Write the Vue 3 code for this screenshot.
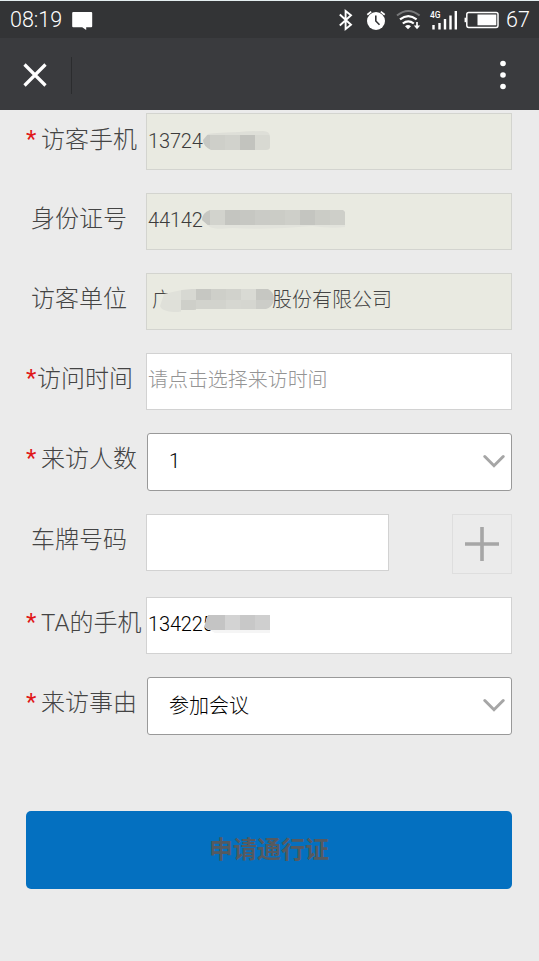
<script setup>
import { ref } from 'vue'

// tight: label text sits right next to the star
const rows = ref([
  { label: '访客手机', required: true, type: 'readonly', value: '13724', mask: 'phone' },
  { label: '身份证号', required: false, type: 'readonly', value: '44142', mask: 'id' },
  { label: '访客单位', required: false, type: 'readonly', value: '广', tail: '股份有限公司', mask: 'company' },
  { label: '访问时间', required: true, tight: true, type: 'input', placeholder: '请点击选择来访时间' },
  { label: '来访人数', required: true, type: 'select', value: '1' },
  { label: '车牌号码', required: false, type: 'plate', value: '' },
  { label: 'TA的手机', required: true, type: 'input', value: '134225', mask: 'host' },
  { label: '来访事由', required: true, type: 'select', value: '参加会议' }
])

const isNumeric = (value) => /^\d+$/.test(value)

// Mosaic blocks: [x, y, width, height, color]
const masks = {
  phone: {
    width: 67,
    height: 20,
    outline: 'M5 3 Q8 2 36 1 Q48 0 60 0 Q67 0 67 6 V16 Q67 19 63 19 H8 Q0 15 0 9 Z',
    blocks: [
      [0, 0, 67, 4, '#dedfd8'],
      [0, 4, 7, 15, '#c7c8c3'],
      [7, 4, 15, 15, '#cecfc9'],
      [22, 4, 15, 15, '#d1d2cc'],
      [37, 4, 15, 15, '#c2c3be'],
      [52, 4, 15, 15, '#d8d9d2']
    ]
  },
  id: {
    width: 143,
    height: 20,
    outline: 'M8 1 H141 L143 3 V18 Q130 20 110 17 Q70 21 30 19 Q14 21 8 18 L0 11 Q0 4 8 1 Z',
    blocks: [
      [0, 0, 143, 20, '#e2e3dc'],
      [0, 0, 8, 16, '#c6c7c2'],
      [8, 0, 15, 16, '#d2d3cd'],
      [23, 0, 15, 16, '#c4c5c0'],
      [38, 0, 15, 16, '#c6c7c2'],
      [53, 0, 15, 16, '#cacbc6'],
      [68, 0, 15, 16, '#cbccc6'],
      [83, 0, 15, 16, '#cecfc9'],
      [98, 0, 15, 16, '#c4c5c0'],
      [113, 0, 15, 16, '#cbccc6'],
      [128, 0, 15, 16, '#cecfc9']
    ]
  },
  company: {
    width: 114,
    height: 24,
    outline: 'M4 6 Q12 4 22 2 L32 1 H108 Q114 4 114 11 Q113 19 106 21 H55 Q35 21 18 24 Q2 24 0 18 Z',
    blocks: [
      [0, 0, 21, 12, '#e0e1da'],
      [21, 0, 15, 12, '#d7d8d2'],
      [36, 0, 15, 12, '#c6c7c2'],
      [51, 0, 15, 12, '#cecfc9'],
      [66, 0, 15, 12, '#d1d2cc'],
      [81, 0, 15, 12, '#d9dad4'],
      [96, 0, 18, 12, '#c6c7c2'],
      [0, 12, 21, 12, '#dfe0d9'],
      [21, 12, 15, 10, '#cecfc9'],
      [36, 12, 30, 9, '#d2d3cd'],
      [66, 12, 15, 9, '#d6d7d1'],
      [81, 12, 15, 9, '#d5d6d0'],
      [96, 12, 18, 9, '#cccdc8']
    ]
  },
  host: {
    width: 66,
    height: 20,
    outline: 'M4 1 H66 V19 H11 L0 13 Q2 7 4 1 Z',
    blocks: [
      [0, 0, 66, 20, '#f5f5f5'],
      [0, 0, 21, 16, '#c4c4c4'],
      [21, 0, 15, 16, '#d3d3d3'],
      [36, 0, 15, 16, '#c8c8c8'],
      [51, 0, 15, 16, '#cfcfcf']
    ]
  }
}
</script>

<template>
  <div class="phone">
    <div class="status-bar">
      <span class="clock">08:19</span>
      <svg class="message" width="21" height="19" viewBox="0 0 21 19">
        <path d="M1.2 0H19.2a1 1 0 0 1 1 1V14.300a1 1 0 0 1-1 1h-5V18l-4-2.700H1.200A1 1 0 0 1 .2 14.300V1a1 1 0 0 1 1-1z" fill="#fff" />
      </svg>
      <div class="status-icons">
        <svg width="189" height="26" viewBox="338 7 189 26">
          <!-- bluetooth -->
          <path d="M339.800 14.500L351 24.700L345.600 29V11L351 15.300L339.800 25.500" fill="none" stroke="#fff" stroke-width="1.900" />
          <!-- alarm -->
          <circle cx="376" cy="21" r="9" fill="#fff" />
          <path d="M375.800 15.500V21L379.500 24.800" fill="none" stroke="#333436" stroke-width="1.600" />
          <path d="M367.300 14.700L371.200 11.600M380.800 11.600L384.700 14.700" stroke="#fff" stroke-width="1.800" />
          <!-- wifi -->
          <path d="M397 15.500Q408.300 6.500 419.600 15.500" fill="none" stroke="#77787a" stroke-width="2" />
          <path d="M400 19.300Q408.300 12.800 416.600 19.300M402.800 23.500Q408.300 19.200 413.800 23.500" fill="none" stroke="#fff" stroke-width="2.200" />
          <path d="M405 26.200Q408 23.700 411 26.200L408 29.200z" fill="#fff" />
          <path d="M417 22V27" stroke="#fff" stroke-width="1.700" />
          <path d="M413.800 25.500H420.200L417 29.200z" fill="#fff" />
          <!-- signal -->
          <text x="430" y="17.600" font-size="8.500" font-weight="500" fill="#fff" font-family="Roboto, sans-serif" textLength="10.500" lengthAdjust="spacingAndGlyphs">4G</text>
          <path d="M433.500 25V29.500M439.500 23V29.500M445 19V29.500M450.500 15.500V29.500M455.800 11V29.500" stroke="#fff" stroke-width="2.400" />
          <!-- battery -->
          <rect x="466.800" y="12.400" width="31.200" height="15" rx="1.800" fill="none" stroke="#fff" stroke-width="1.500" />
          <rect x="477.500" y="14.500" width="18.800" height="10.800" fill="#fff" />
          <path d="M465.300 17.700V22.200" stroke="#fff" stroke-width="1.500" />
        </svg>
        <span class="battery-level">67</span>
      </div>
    </div>

    <div class="nav-bar">
      <svg width="24" height="24" viewBox="0 0 24 24">
        <path d="M1.500 1.500L22.500 22.500M22.500 1.500L1.500 22.500" stroke="#fff" stroke-width="3.200" />
      </svg>
      <span class="divider"></span>
      <svg class="more" width="6" height="30" viewBox="0 0 6 30">
        <circle cx="3" cy="3.500" r="2.800" fill="#fff" />
        <circle cx="3" cy="15" r="2.800" fill="#fff" />
        <circle cx="3" cy="26.500" r="2.800" fill="#fff" />
      </svg>
    </div>

    <form class="visit-form" @submit.prevent>
      <div v-for="row in rows" :key="row.label" class="row">
        <div class="label" :class="{ optional: !row.required, tight: row.tight }">
          <span v-if="row.required" class="star">*</span>
          <span>{{ row.label }}</span>
        </div>

        <div v-if="row.type === 'select'" class="select">
          <span :class="{ number: isNumeric(row.value) }">{{ row.value }}</span>
          <svg width="22" height="14" viewBox="0 0 22 14">
            <path d="M1.800 2.500L11 11.700L20.200 2.500" fill="none" stroke="#a6a6a6" stroke-width="3" stroke-linecap="round" />
          </svg>
        </div>

        <div v-else-if="row.type === 'plate'" class="plate">
          <div class="field"></div>
          <div class="add">
            <svg width="34" height="34" viewBox="0 0 34 34">
              <path d="M17 0V34M0 17H34" stroke="#a6a6a6" stroke-width="3.600" />
            </svg>
          </div>
        </div>

        <div v-else class="field" :class="[{ readonly: row.type === 'readonly' }, row.mask]">
          <span v-if="row.value" :class="{ number: isNumeric(row.value) }">{{ row.value }}</span>
          <span v-else class="placeholder">{{ row.placeholder }}</span>
          <span v-if="row.tail" class="tail">{{ row.tail }}</span>
          <svg
            v-if="row.mask"
            class="mask"
            :width="masks[row.mask].width"
            :height="masks[row.mask].height"
          >
            <clipPath :id="`clip-${row.mask}`">
              <path :d="masks[row.mask].outline" />
            </clipPath>
            <g :clip-path="`url(#clip-${row.mask})`" shape-rendering="crispEdges">
              <rect
                v-for="(b, i) in masks[row.mask].blocks"
                :key="i"
                :x="b[0]"
                :y="b[1]"
                :width="b[2]"
                :height="b[3]"
                :fill="b[4]"
              />
            </g>
          </svg>
        </div>
      </div>

      <button class="submit" type="submit">申请通行证</button>
    </form>
  </div>
</template>

<style>
body {
  margin: 0;
  background: #ebebeb;
}
</style>

<style scoped>
.phone {
  box-sizing: border-box;
  width: 539px;
  height: 961px;
  overflow: hidden;
  background: #ebebeb;
  font-family: Roboto, 'Noto Sans CJK SC', sans-serif;
  font-weight: 300;
}

.status-bar {
  box-sizing: border-box;
  display: flex;
  align-items: center;
  height: 38px;
  padding: 0 9px 0 10px;
  border-top: 1px solid #e4eef0;
  background: #333436;
  color: #fff;
  font-size: 21.5px;
  font-weight: 350;
}

.clock {
  width: 62px;
}

.message {
  margin-top: 3px;
}

.status-icons {
  display: flex;
  align-items: center;
  margin-left: auto;
}

.status-icons svg {
  margin-right: -21px;
}

.battery-level {
  width: 24px;
}

.nav-bar {
  box-sizing: border-box;
  display: flex;
  align-items: center;
  height: 72px;
  padding: 2px 33px 0 23px;
  background: #3a3b3e;
}

.divider {
  width: 1px;
  height: 37px;
  margin-left: 24px;
  background: #2b2c2e;
}

.more {
  margin-left: auto;
}

.visit-form {
  display: flex;
  flex-direction: column;
  gap: 23px;
  padding: 3px 27px 0 26px;
}

.row {
  display: flex;
}

.label {
  display: flex;
  gap: 5px;
  flex: none;
  width: 120px;
  height: 52px;
  line-height: 52px;
  font-size: 24px;
  white-space: nowrap;
  color: #444;
}

.row:first-child .label,
.row:first-child .field {
  line-height: 54px;
}

.label.optional {
  box-sizing: border-box;
  padding-left: 5px;
}

.label.tight {
  gap: 1px;
}

.star {
  width: 10px;
  margin-top: -1px;
  font-weight: 400;
  color: #e01818;
}

.field {
  position: relative;
  box-sizing: border-box;
  flex: 1;
  height: 57px;
  padding-left: 1px;
  border: 1px solid #d2d2d2;
  background: #fff;
  font-size: 20px;
  line-height: 53px;
  white-space: nowrap;
  color: #111;
}

.field.readonly {
  border-color: #d3d4cf;
  background: #e9eae1;
  color: #444;
}

.field.company {
  padding-left: 5px;
}

.number {
  letter-spacing: -0.15px;
  color: #000;
}

.readonly .number {
  color: #3c3c3c;
}

.placeholder {
  letter-spacing: -0.05px;
  color: #949494;
}

.tail {
  margin-left: 100px;
}

.mask {
  position: absolute;
  top: 17px;
  left: 56px;
}

.id .mask {
  top: 15px;
  left: 55px;
}

.company .mask {
  top: 14px;
  left: 13px;
}

.host .mask {
  top: 16px;
  left: 57px;
}

.select {
  box-sizing: border-box;
  display: flex;
  align-items: center;
  justify-content: space-between;
  flex: 1;
  height: 58px;
  margin-left: 1px;
  padding: 0 6px 3px 21px;
  border: 1px solid #999;
  border-radius: 3px;
  background: #fff;
  font-size: 20px;
  color: #000;
}

.plate {
  display: flex;
  justify-content: space-between;
  flex: 1;
}

.plate .field {
  flex: none;
  width: 243px;
}

.add {
  box-sizing: border-box;
  display: flex;
  align-items: center;
  justify-content: center;
  width: 60px;
  height: 60px;
  border: 1px solid #dedede;
}

.submit {
  height: 78px;
  margin-top: 53px;
  padding: 0 0 5px;
  border: 0;
  border-radius: 5px;
  background: #0470c0;
  font-family: inherit;
  font-size: 24px;
  font-weight: 700;
  color: #555a60;
}
</style>
